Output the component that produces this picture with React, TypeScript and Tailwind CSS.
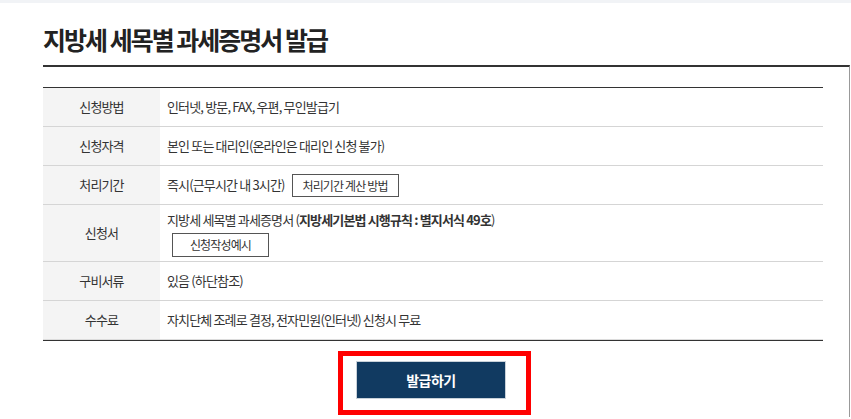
export default function App() {
  const rows: { label: string; content: React.ReactNode; tall?: boolean }[] = [
    { label: "신청방법", content: "인터넷, 방문, FAX, 우편, 무인발급기" },
    { label: "신청자격", content: "본인 또는 대리인(온라인은 대리인 신청 불가)" },
    {
      label: "처리기간",
      content: (
        <div className="flex items-center">
          <span>즉시(근무시간 내 3시간)</span>
          <button className="ml-[7px] h-[23px] w-[107px] border border-[#555] bg-white text-[12px] leading-[21px] text-[#333]">
            처리기간 계산 방법
          </button>
        </div>
      ),
    },
    {
      label: "신청서",
      tall: true,
      content: (
        <div className="flex flex-col items-start gap-[3px]">
          <span>
            지방세 세목별 과세증명서 (<b className="font-bold">지방세기본법 시행규칙 : 별지서식 49호</b>)
          </span>
          <button className="ml-[5px] h-[24px] w-[97px] border border-[#555] bg-white text-[12px] leading-[22px] text-[#333]">
            신청작성예시
          </button>
        </div>
      ),
    },
    { label: "구비서류", content: "있음 (하단참조)" },
    { label: "수수료", content: "자치단체 조례로 결정, 전자민원(인터넷) 신청시 무료" },
  ];

  return (
    <div
      className="min-h-[419px] bg-white text-[#333]"
      style={{ fontFamily: '"Noto Sans CJK KR", "Noto Sans", sans-serif' }}
    >
      {/* top strip */}
      <div className="h-[3px] bg-[#f1f3f6]" />

      <div className="ml-[43px]">
        <h1 className="mt-[18px] text-[25px] leading-[36px] font-bold tracking-[-2px] text-[#222]">
          지방세 세목별 과세증명서 발급
        </h1>

        <div className="mt-[8px] w-[807px] min-h-[352px] border-t-2 border-[#333] border-r border-r-[#999]">
          {/* info table */}
          <div className="mt-[20px] w-[780px] border-t border-[#333] border-b border-b-[#333] text-[13px] tracking-[-0.85px] leading-[20px]">
            {rows.map((row, i) => (
              <div
                key={row.label}
                className={`flex border-b ${
                  i === rows.length - 1 ? "border-[#dcdcdc]" : "border-[#d5d5d5]"
                } ${row.tall ? "h-[57px]" : "h-[39px]"}`}
              >
                <div className="w-[117px] shrink-0 bg-[#f4f4f4] flex items-center justify-center text-[#333]">
                  {row.label}
                </div>
                <div className="flex-1 flex items-center pl-[7px] text-[#333]">
                  {row.content}
                </div>
              </div>
            ))}
          </div>

          {/* issue button */}
          <div className="w-[780px] flex justify-center pl-[3px] mt-[10px]">
            <div className="border-[5px] border-[#ff0000] pt-[5px] pb-[11px] pl-[13px] pr-[20px]">
              <button className="w-[150px] h-[38px] bg-[#113a61] border border-[#c9d1d9] text-white text-[14px] font-bold tracking-[-0.5px]">
                발급하기
              </button>
            </div>
          </div>
        </div>
      </div>
    </div>
  );
}
